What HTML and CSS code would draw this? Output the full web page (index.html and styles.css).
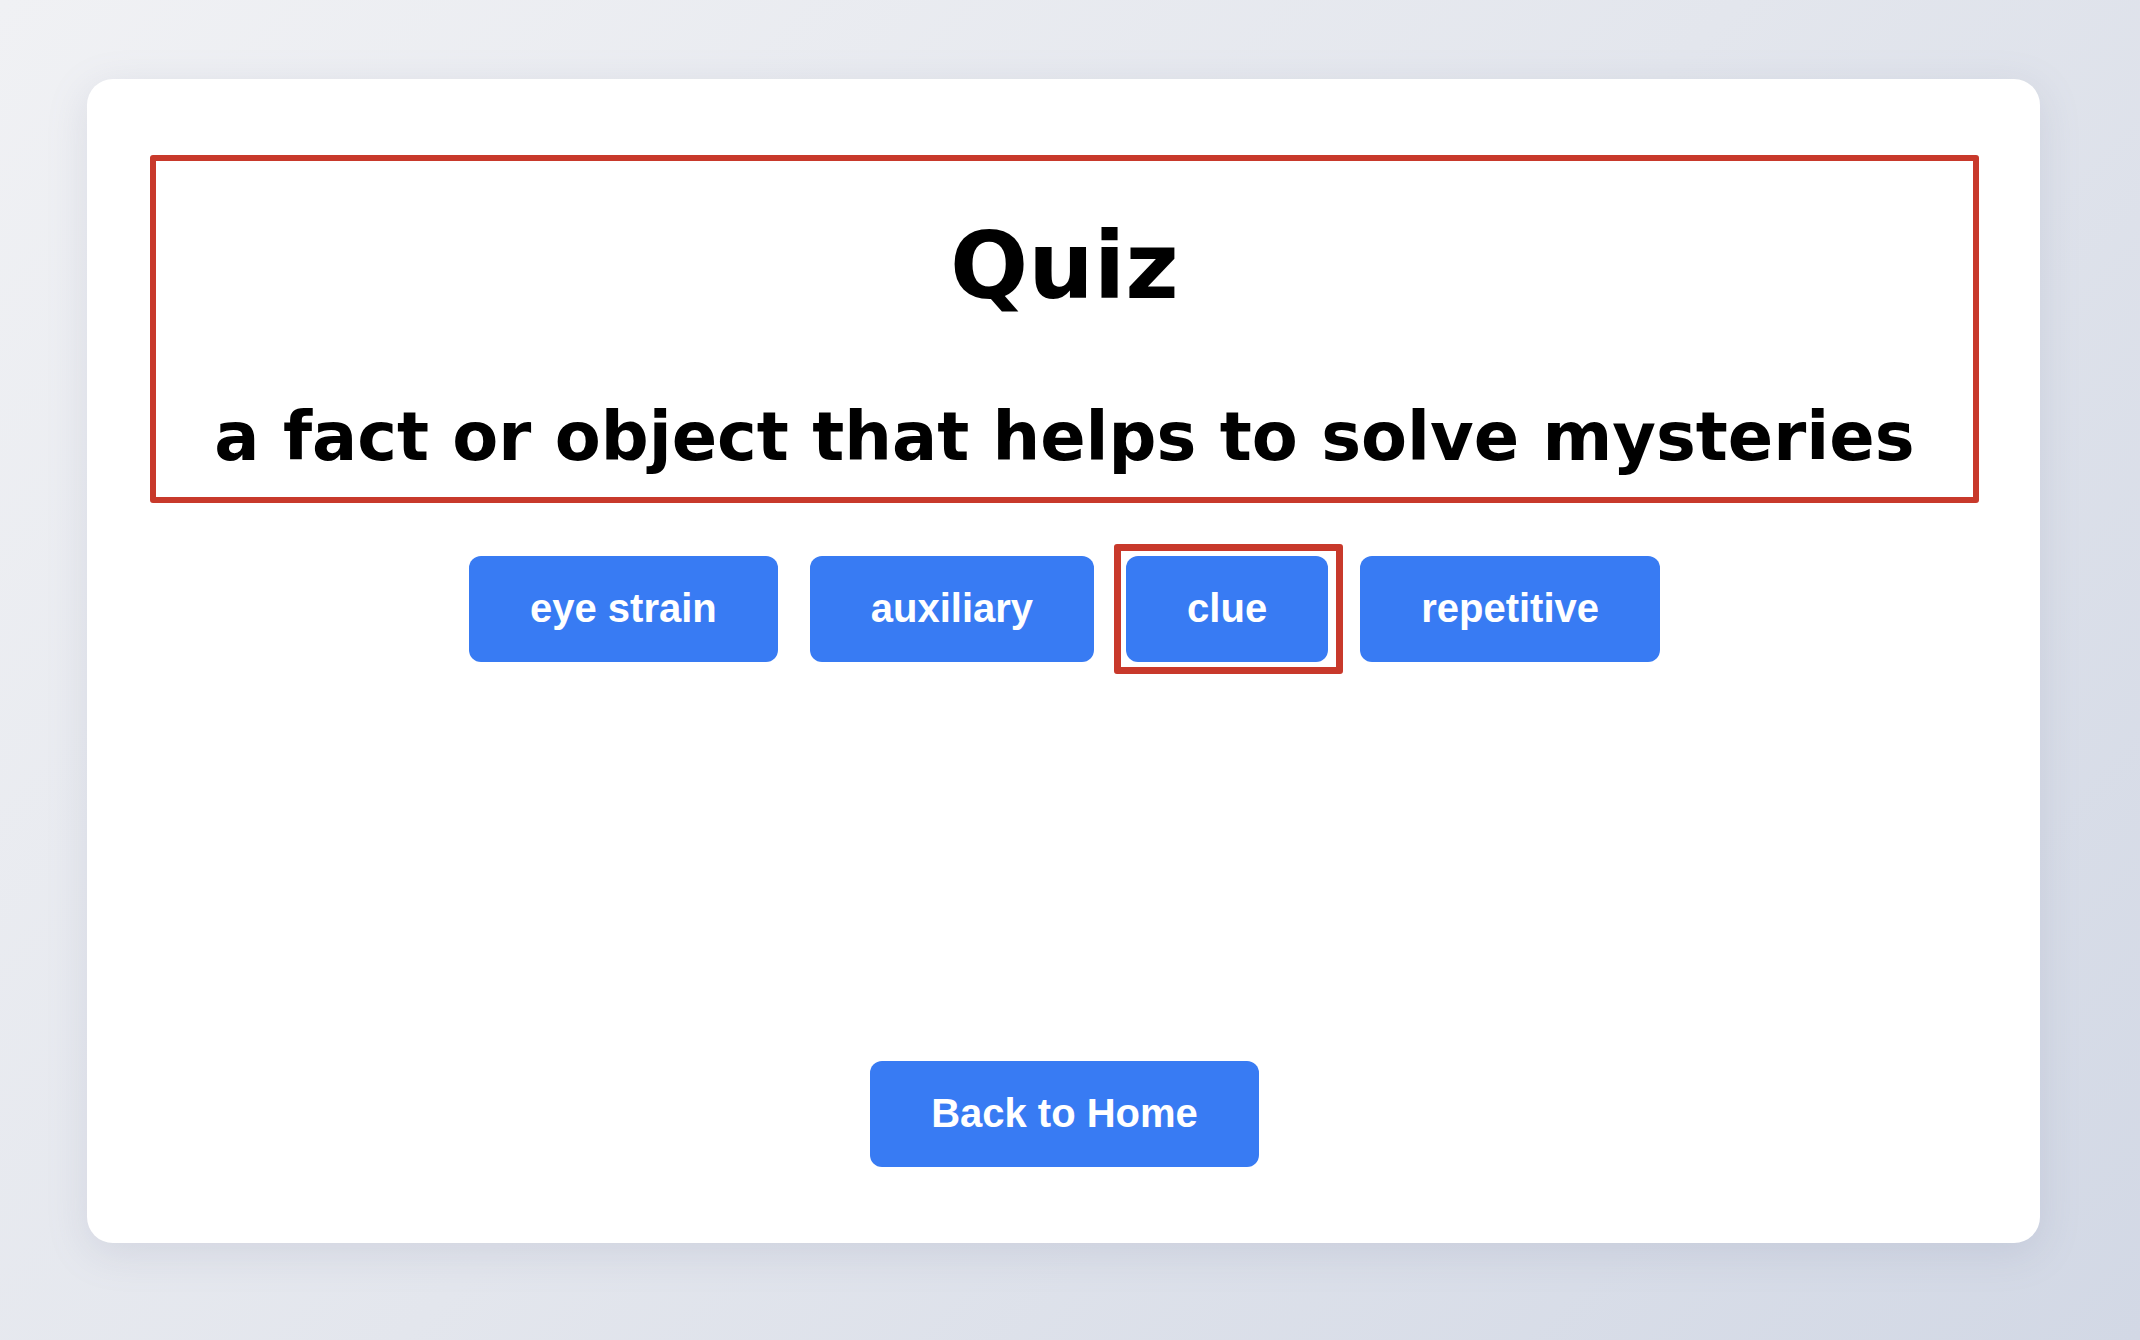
FILE: index.html
```html
<!DOCTYPE html>
<html lang="en">
<head>
<meta charset="utf-8">
<title>Quiz</title>
<link rel="stylesheet" href="styles.css">
</head>
<body>
  <main class="card">
    <header class="quiz-head">
      <h1 class="quiz-title">Quiz</h1>
      <h2 class="quiz-question">a fact or object that helps to solve mysteries</h2>
    </header>
    <div class="options">
      <button class="btn">eye strain</button>
      <button class="btn">auxiliary</button>
      <button class="btn btn-marked">clue</button>
      <button class="btn">repetitive</button>
    </div>
    <div class="footer">
      <button class="btn">Back to Home</button>
    </div>
  </main>
</body>
</html>
```

FILE: styles.css
```css
html, body {
  margin: 0;
  height: 100%;
}

body {
  box-sizing: border-box;
  padding: 79px 100px 0 87px;
  background: linear-gradient(135deg, #f0f1f4 0%, #e3e6ed 50%, #d2d8e5 100%);
  font-family: "DejaVu Sans", "Lato", sans-serif;
}

.card {
  box-sizing: border-box;
  width: 1953px;
  height: 1164px;
  background: #ffffff;
  border-radius: 26px;
  box-shadow: 0 10px 40px rgba(120, 130, 160, 0.18);
  padding: 76px 61px 76px 63px;
  display: flex;
  flex-direction: column;
  align-items: center;
}

.quiz-head {
  box-sizing: border-box;
  width: 100%;
  height: 349px;
  border: 6px solid #c8392b;
  border-radius: 3px;
  display: flex;
  flex-direction: column;
  align-items: center;
  padding-top: 48px;
}

.quiz-title {
  margin: 0;
  font-size: 92px;
  line-height: 116px;
  font-weight: 700;
  color: #000;
}

.quiz-question {
  margin: 68px 0 0;
  font-size: 67px;
  line-height: 88px;
  font-weight: 700;
  color: #000;
  white-space: nowrap;
}

.options {
  margin-top: 53px;
  display: flex;
  gap: 32px;
  justify-content: center;
}

.btn {
  border: 0;
  margin: 0;
  background: #387bf3;
  color: #ffffff;
  font-family: "Liberation Sans", Arial, sans-serif;
  font-weight: 700;
  font-size: 40px;
  line-height: 46px;
  padding: 29px 61px 31px;
  border-radius: 12px;
}

.btn-marked {
  position: relative;
}

.btn-marked::after {
  content: "";
  position: absolute;
  top: -12px;
  left: -12px;
  right: -15px;
  bottom: -12px;
  border: 7px solid #c8392b;
  border-radius: 3px;
  pointer-events: none;
}

.footer {
  margin-top: 399px;
  display: flex;
  justify-content: center;
}
```
